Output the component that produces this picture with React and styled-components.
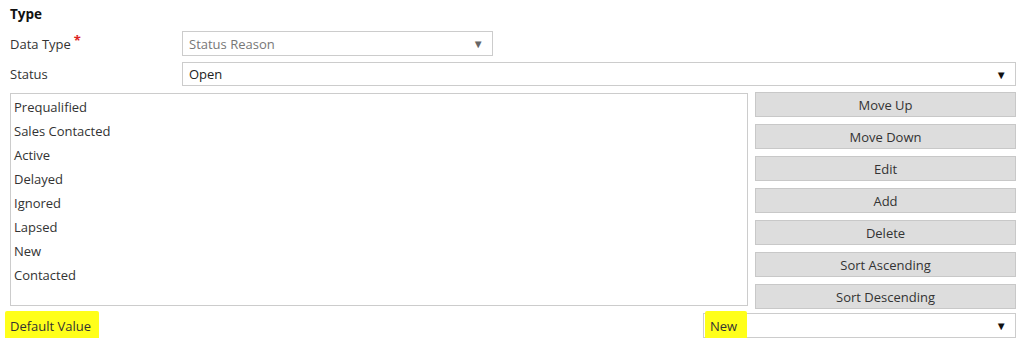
import styled, { createGlobalStyle } from 'styled-components';

const Global = createGlobalStyle`
  body {
    margin: 0;
    background: #fff;
    font-family: "Open Sans", "Noto Sans", sans-serif;
    font-size: 13px;
    color: #333;
  }
`;

const Page = styled.div`
  padding: 4px 8px 0 10px;
  display: flex;
  flex-direction: column;
`;

const Heading = styled.div`
  font-weight: bold;
  font-size: 13.5px;
  color: #111;
  height: 22px;
  line-height: 20px;
  margin-bottom: 5px;
`;

// label + field
const FieldRow = styled.div`
  display: grid;
  grid-template-columns: 172px 1fr;
  align-items: center;
  height: ${p => p.$h || 25}px;
  margin-bottom: ${p => p.$mb || 0}px;
`;

const Label = styled.div`
  color: #333;
`;

const Req = styled.span`
  color: #d22;
  margin-left: 3px;
  position: relative;
  top: -4px;
  font-size: 13px;
  font-weight: bold;
`;

const Select = styled.div`
  box-sizing: border-box;
  height: ${p => p.$h || 25}px;
  width: ${p => p.$w || '100%'};
  border: 1px solid #ccc;
  display: flex;
  align-items: center;
  justify-content: space-between;
  padding: 0 8px 0 6px;
  color: ${p => (p.$disabled ? '#777' : '#222')};
  background: #fff;
`;

const Arrow = styled.span`
  font-size: 11.5px;
  color: ${p => (p.$disabled ? '#666' : '#111')};
`;

const Middle = styled.div`
  display: grid;
  grid-template-columns: 738px 1fr;
  column-gap: 7px;
  margin-top: 6px;
`;

const ListBox = styled.div`
  box-sizing: border-box;
  height: 213px;
  margin-top: 1px;
  border: 1px solid #ccc;
  padding: 1px 0 0 3px;
`;

const Item = styled.div`
  height: 24px;
  line-height: 24px;
  color: #333;
`;

const Buttons = styled.div`
  display: flex;
  flex-direction: column;
  gap: 7px;
`;

const Button = styled.button`
  box-sizing: border-box;
  height: 25px;
  width: 261px;
  border: 1px solid #c8c8c8;
  background: #dddddd;
  font-family: inherit;
  font-size: 13px;
  color: #333;
  padding: 0;
`;

const Bottom = styled.div`
  display: flex;
  justify-content: space-between;
  align-items: center;
  margin-top: 4px;
  height: 25px;
`;

const Marker = styled.span`
  background: #ffff1a;
  padding: 6px ${p => p.$pr || 6}px 6px 5px;
  margin-left: -5px;
  border-radius: 2px;
  color: #333;
`;

const items = ['Prequalified', 'Sales Contacted', 'Active', 'Delayed', 'Ignored', 'Lapsed', 'New', 'Contacted'];
const actions = ['Move Up', 'Move Down', 'Edit', 'Add', 'Delete', 'Sort Ascending', 'Sort Descending'];

export default function App() {
  return (
    <Page>
      <Global />
      <Heading>Type</Heading>
      <FieldRow $mb={6}>
        <Label>Data Type<Req>*</Req></Label>
        <Select $w="311px" $disabled>
          Status Reason
          <Arrow $disabled>▼</Arrow>
        </Select>
      </FieldRow>
      <FieldRow $h={24}>
        <Label>Status</Label>
        <Select $h={24}>
          Open
          <Arrow>▼</Arrow>
        </Select>
      </FieldRow>
      <Middle>
        <ListBox>
          {items.map(i => <Item key={i}>{i}</Item>)}
        </ListBox>
        <Buttons>
          {actions.map(a => <Button key={a}>{a}</Button>)}
        </Buttons>
      </Middle>
      <Bottom>
        <Label><Marker $pr={8}>Default Value</Marker></Label>
        <Select $w="313px" style={{ paddingLeft: 1 }}>
          <Marker $pr={10} style={{ marginLeft: 0 }}>New</Marker>
          <Arrow>▼</Arrow>
        </Select>
      </Bottom>
    </Page>
  );
}
